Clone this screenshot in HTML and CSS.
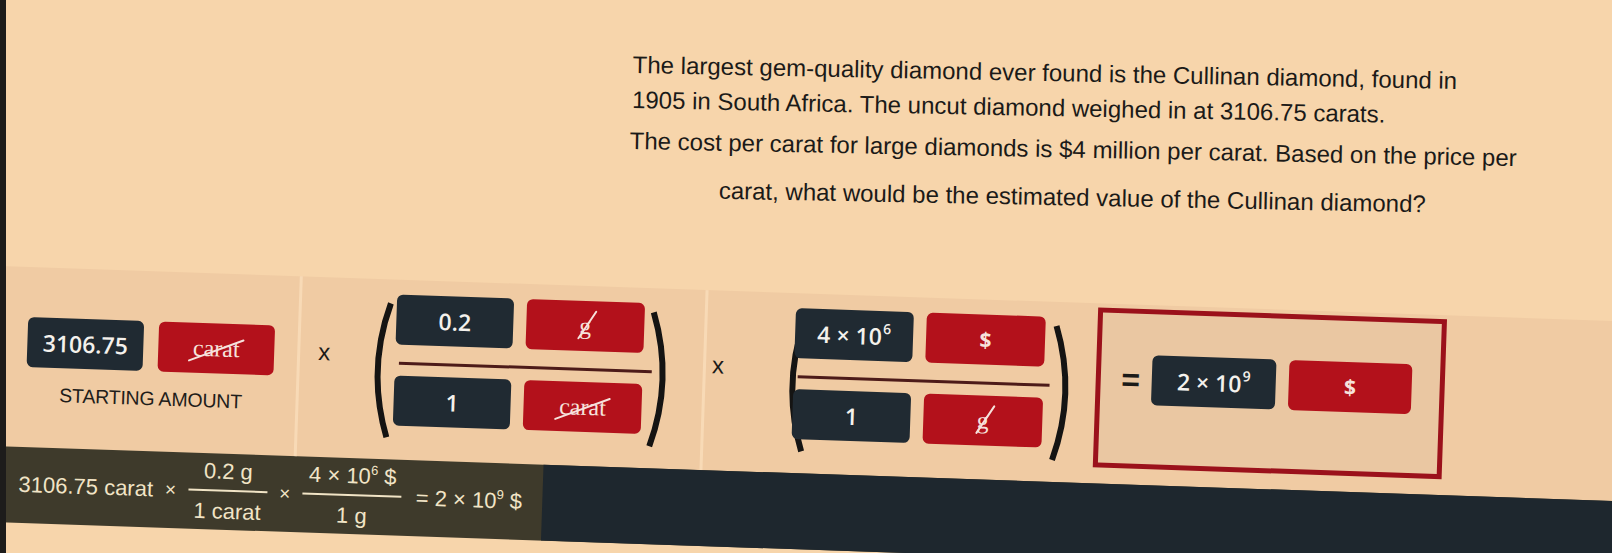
FILE: index.html
```html
<!DOCTYPE html>
<html lang="en">
<head>
<meta charset="utf-8">
<title>Dimensional analysis – Cullinan diamond</title>
<link rel="stylesheet" href="styles.css">
</head>
<body>
<div class="question">
  <p class="q1">The largest gem-quality diamond ever found is the Cullinan diamond, found in<br>1905 in South Africa. The uncut diamond weighed in at 3106.75 carats.</p>
  <p class="q2">The cost per carat for large diamonds is $4 million per carat. Based on the price per<br>carat, what would be the estimated value of the Cullinan diamond?</p>
</div>

<div class="workspace">
  <div class="band">
    <div class="sec-start">
      <div class="pair">
        <div class="box num-box w116">3106.75</div>
        <div class="box unit-box w116"><span class="unit strike-long">carat</span></div>
      </div>
      <div class="label">STARTING AMOUNT</div>
    </div>

    <div class="sec-conv conv-a">
      <span class="times">x</span>
      <svg class="paren" viewBox="0 0 25 140" width="25" height="140"><path d="M22 3 Q0 70 22 137"/></svg>
      <div class="frac">
        <div class="frac-row">
          <div class="box num-box w117">0.2</div>
          <div class="box unit-box w118"><span class="unit strike-short">g</span></div>
        </div>
        <div class="frac-line"></div>
        <div class="frac-row">
          <div class="box num-box w117">1</div>
          <div class="box unit-box w118"><span class="unit strike-long">carat</span></div>
        </div>
      </div>
      <svg class="paren paren-close" viewBox="0 0 28 140" width="28" height="140"><path d="M4 3 Q26 70 4 137"/></svg>
    </div>

    <div class="sec-conv conv-b">
      <span class="times">x</span>
      <svg class="paren" viewBox="0 0 25 140" width="25" height="140"><path d="M22 3 Q0 70 22 137"/></svg>
      <div class="frac">
        <div class="frac-row">
          <div class="box num-box w118">4 × 10<span class="sup">6</span></div>
          <div class="box unit-box w119"><span class="dollar">$</span></div>
        </div>
        <div class="frac-line"></div>
        <div class="frac-row">
          <div class="box num-box w118">1</div>
          <div class="box unit-box w119"><span class="unit strike-short">g</span></div>
        </div>
      </div>
      <svg class="paren paren-close" viewBox="0 0 28 140" width="28" height="140"><path d="M4 3 Q26 70 4 137"/></svg>
    </div>

    <div class="answer">
      <span class="equals">=</span>
      <div class="box num-box w124">2 × 10<span class="sup">9</span></div>
      <div class="box unit-box w123"><span class="dollar">$</span></div>
    </div>
  </div>

  <div class="summary">
    <div class="eq">
      <span>3106.75 carat</span>
      <span class="op">×</span>
      <span class="sfrac"><span class="snum">0.2 g</span><span class="sden">1 carat</span></span>
      <span class="op">×</span>
      <span class="sfrac"><span class="snum">4 × 10<span class="ssup">6</span> $</span><span class="sden">1 g</span></span>
      <span class="result">= 2 × 10<span class="ssup">9</span> $</span>
    </div>
    <div class="rest"></div>
  </div>
</div>
</body>
</html>
```

FILE: styles.css
```css
* { box-sizing: border-box; }

html, body {
  margin: 0;
  padding: 0;
}

body {
  width: 1612px;
  height: 553px;
  overflow: hidden;
  background: #f7d5ab;
  font-family: "Liberation Sans", Arial, sans-serif;
  color: #1b1a18;
}

/* monitor bezel on the left edge */
body::before {
  content: "";
  position: fixed;
  left: 0;
  top: 0;
  width: 6px;
  height: 100%;
  background: #1d1c1b;
  z-index: 5;
}

/* ---------- question ---------- */
.question {
  margin-left: 630px;
  padding-top: 47px;
  width: 920px;
  font-size: 24px;
  transform: rotate(1.1deg);
  transform-origin: 0 0;
}

.q1 {
  margin: 0;
  padding-left: 4px;
  line-height: 35px;
  white-space: nowrap;
}

.q2 {
  margin: 0;
  width: 892px;
  line-height: 48px;
  text-align: center;
  white-space: nowrap;
}

/* ---------- workspace ---------- */
.workspace {
  margin-top: 52px;
  margin-left: -30px;
  width: 1740px;
  transform: rotate(1.95deg);
  transform-origin: 0 0;
}

.band {
  display: flex;
  align-items: flex-start;
  height: 180px;
  padding-left: 36px;
  background: #f0cba3;
}

.box {
  height: 50px;
  border-radius: 6px;
  display: flex;
  align-items: center;
  justify-content: center;
  flex: none;
}

.num-box {
  background: #202a32;
  color: #f4f1ec;
  font-family: "Open Sans", "Liberation Sans", sans-serif;
  font-weight: 600;
  font-size: 23px;
}

.unit-box {
  background: #b3111b;
  color: #f6e2dc;
}

.w116 { width: 116px; }
.w117 { width: 117px; }
.w118 { width: 118px; }
.w119 { width: 119px; }
.w123 { width: 123px; }
.w124 { width: 124px; }

.sup {
  font-size: 14px;
  align-self: flex-start;
  margin-top: 8px;
  margin-left: 1px;
}

.unit {
  position: relative;
  font-family: "Liberation Serif", "Times New Roman", serif;
  font-size: 24px;
  line-height: 1;
}

.unit::after {
  content: "";
  position: absolute;
  left: 50%;
  top: 55%;
  height: 2px;
  background: #f6e2dc;
  border-radius: 1px;
}

.strike-long::after {
  width: 60px;
  margin-left: -30px;
  transform: rotate(-22deg);
}

.strike-short::after {
  width: 34px;
  margin-left: -15px;
  top: 40%;
  transform: rotate(-58deg);
}

.dollar {
  font-family: "Open Sans", "Liberation Sans", sans-serif;
  font-weight: 700;
  font-size: 21px;
}

/* starting amount */
.sec-start {
  width: 294px;
  padding: 50px 0 0 24px;
  flex: none;
}

.pair {
  display: flex;
  gap: 15px;
}

.label {
  width: 250px;
  margin-top: 16px;
  text-align: center;
  font-size: 19.5px;
  letter-spacing: -0.2px;
  color: #1f1d1a;
}

/* conversion factors */
.sec-conv {
  display: flex;
  align-items: flex-start;
  height: 180px;
  border-left: 3px solid #f8dab6;
  flex: none;
}

.conv-a { width: 406px; padding-left: 18px; }
.conv-b { width: 391px; padding-left: 6px; }

.times {
  margin-top: 63px;
  width: 12px;
  font-size: 24px;
  line-height: 24px;
  color: #1b1a18;
}

.paren {
  margin-top: 21px;
  flex: none;
}

.paren path {
  fill: none;
  stroke: #151413;
  stroke-width: 6;
}

.conv-a .paren { margin-left: 37px; }
.conv-b .paren { margin-left: 58px; }
.conv-a .paren-close { margin-left: -4px; }
.conv-b .paren-close { margin-left: 1px; }

.frac {
  margin-top: 15px;
  flex: none;
}

.conv-a .frac { width: 257px; margin-left: 3px; }
.conv-b .frac { width: 256px; margin-left: -13px; }

.frac-row {
  display: flex;
  gap: 13px;
}

.frac-line {
  height: 3px;
  margin: 17px 0 11px 4px;
  background: #4d1b19;
}

/* answer */
.answer {
  display: flex;
  align-items: flex-start;
  width: 349px;
  height: 160px;
  margin-top: 4px;
  margin-left: 2px;
  padding: 41px 0 0 20px;
  border: 5px solid #9b111b;
  background: #eac7a2;
  flex: none;
}

.equals {
  width: 20px;
  margin-right: 11px;
  font-size: 32px;
  font-weight: 700;
  line-height: 50px;
  text-align: center;
  color: #1b1a18;
}

.answer .num-box { margin-right: 13px; }

/* summary bar */
.summary {
  display: flex;
  height: 76px;
  padding-left: 36px;
  background: #3e3a2b;
}

.eq {
  width: 544px;
  display: flex;
  align-items: center;
  gap: 12px;
  padding-left: 20px;
  color: #f1e4c6;
  font-size: 22px;
  flex: none;
}

.op { font-size: 19px; }

.sfrac {
  display: inline-flex;
  flex-direction: column;
  align-items: stretch;
  text-align: center;
}

.snum {
  line-height: 28px;
  padding: 0 6px 4px;
  border-bottom: 2px solid #f1e4c6;
}

.sden {
  line-height: 28px;
  padding: 6px 6px 0;
}

.ssup {
  font-size: 13px;
  vertical-align: 9px;
  line-height: 0;
}

.result { margin-left: 2px; }

.rest {
  flex: 1;
  background: #1e272e;
}
```
